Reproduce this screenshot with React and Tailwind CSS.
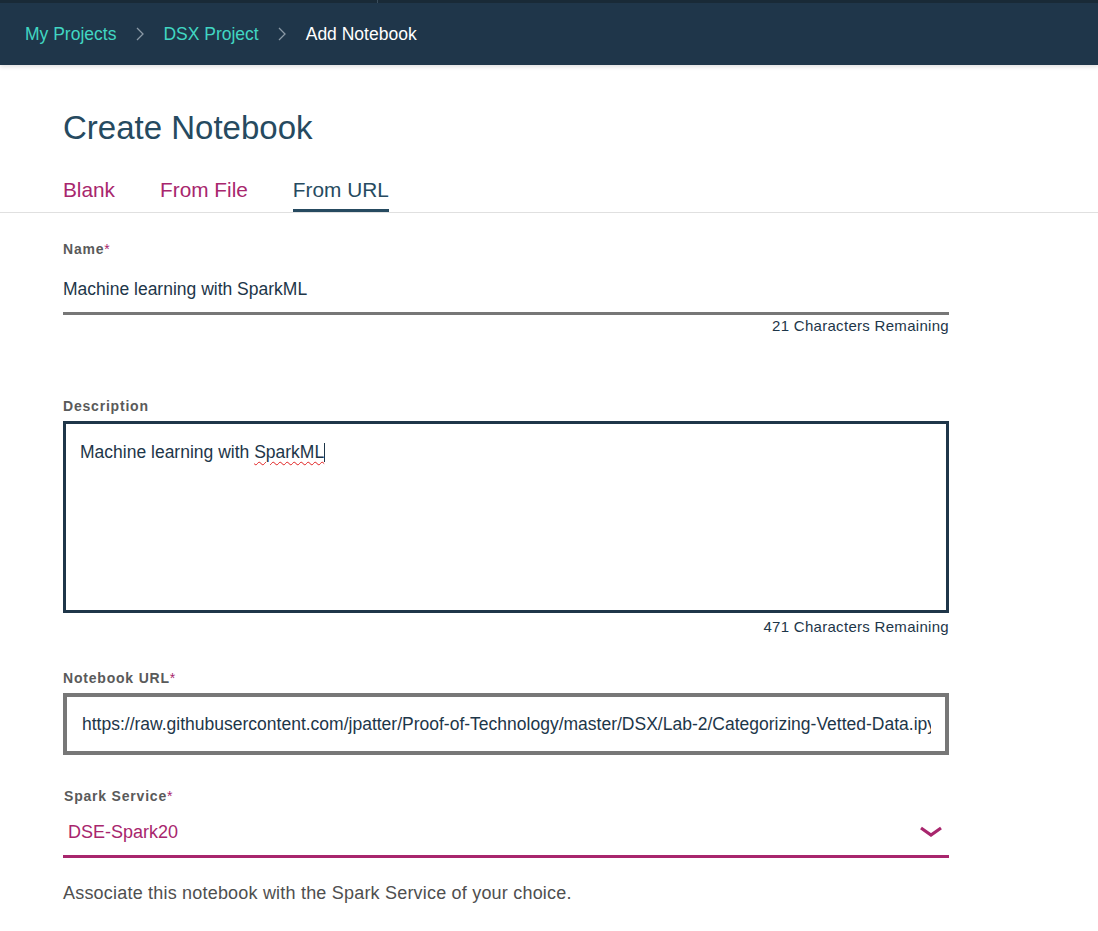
import React from "react";

const font = { fontFamily: '"Liberation Sans", Arial, sans-serif' };

function Crumb() {
  return (
    <svg width="8" height="14" viewBox="0 0 8 14" className="mx-[19.5px]">
      <polyline points="1,1 7,7 1,13" fill="none" stroke="#8a99a6" strokeWidth="1.3" />
    </svg>
  );
}

function Label({ children, req }) {
  return (
    <div className="text-[14px] leading-[16px] font-bold tracking-[0.8px] text-[#5a5a5a]">
      {children}
      {req && <span className="text-[#a8266d] font-normal">*</span>}
    </div>
  );
}

export default function App() {
  return (
    <div style={font} className="min-h-[931px] bg-white">
      <header className="h-[65px] bg-[#1f364a] shadow-[0_2px_4px_rgba(0,0,0,0.12)] relative">
        <div className="h-[3px] bg-[#192a37] flex">
          <div className="w-[377px]" />
          <div className="w-px bg-[#3a4d5c]" />
        </div>
        <div className="h-[62px] flex items-center pl-[25px] text-[17.5px]">
          <span className="text-[#41d6c3]">My Projects</span>
          <Crumb />
          <span className="text-[#41d6c3]">DSX Project</span>
          <Crumb />
          <span className="text-white">Add Notebook</span>
        </div>
      </header>

      <div className="pl-[63px] pt-[43px]">
        <h1 className="text-[33px] leading-[40px] text-[#264a60]">Create Notebook</h1>
      </div>
      <div className="mt-[30px] border-b border-[#e0e0e0] flex pl-[63px] text-[20.8px] leading-[24px]">
        <div className="text-[#a8266d] pb-[10px]">Blank</div>
        <div className="text-[#a8266d] pb-[10px] ml-[45px]">From File</div>
        <div className="text-[#264a60] pb-[7px] border-b-[3px] border-[#264a60] ml-[45px]">From URL</div>
      </div>

      <div className="pl-[63px] w-[949px]">
        <div className="mt-[28px]">
          <Label req>Name</Label>
        </div>
        <div className="mt-[22px] pb-[13px] border-b-[3px] border-[#777777] text-[17.5px] leading-[20px] text-[#1d3649]">
          Machine learning with SparkML
        </div>
        <div className="mt-[3px] text-right text-[15px] leading-[16px] tracking-[0.3px] text-[#1d3649]">
          21 Characters Remaining
        </div>

        <div className="mt-[64px]">
          <Label>Description</Label>
        </div>
        <div className="mt-[7px] h-[192px] border-[3px] border-[#1f3649] pl-[14px] pt-[18px] text-[17.5px] leading-[20px] text-[#1d3649]">
          Machine learning with{" "}
          <span className="underline decoration-wavy decoration-[#e02020] decoration-1 underline-offset-[3px]">SparkML</span>
          <span className="inline-block w-px h-[19px] bg-[#1d3649] align-[-4px]" />
        </div>
        <div className="mt-[6px] text-right text-[15px] leading-[16px] tracking-[0.3px] text-[#1d3649]">
          471 Characters Remaining
        </div>

        <div className="mt-[35px]">
          <Label req>Notebook URL</Label>
        </div>
        <div className="mt-[7px] h-[62px] border-[4px] border-[#777777] pl-[15px] pr-[14px] flex items-center overflow-hidden">
          <div className="whitespace-nowrap overflow-hidden text-[17.5px] leading-[20px] text-[#1d3649]">
            https://raw.githubusercontent.com/jpatter/Proof-of-Technology/master/DSX/Lab-2/Categorizing-Vetted-Data.ipynb
          </div>
        </div>

        <div className="mt-[33px] pl-px">
          <Label req>Spark Service</Label>
        </div>
        <div className="mt-[18px] pb-[13px] border-b-[3px] border-[#a8266d] flex items-center justify-between pl-[5px] pr-[6px]">
          <span className="text-[18px] leading-[20px] text-[#a8266d]">DSE-Spark20</span>
          <svg width="24" height="12" viewBox="0 0 24 12">
            <polyline points="2,2 12,9 22,2" fill="none" stroke="#a8266d" strokeWidth="3.2" />
          </svg>
        </div>
        <div className="mt-[25px] text-[18px] leading-[20px] tracking-[0.2px] text-[#4f4f4f]">
          Associate this notebook with the Spark Service of your choice.
        </div>
      </div>
    </div>
  );
}
